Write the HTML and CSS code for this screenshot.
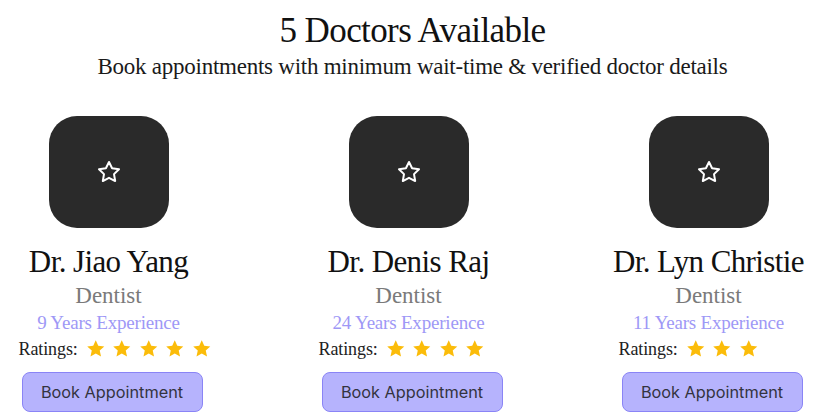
FILE: index.html
```html
<!DOCTYPE html>
<html lang="en">
<head>
<meta charset="utf-8">
<title>Doctors</title>
<link rel="stylesheet" href="styles.css">
</head>
<body>
<main class="page">
  <header class="intro">
    <h1 class="title">5 Doctors Available</h1>
    <p class="subtitle">Book appointments with minimum wait-time &amp; verified doctor details</p>
  </header>
  <section class="doctors">
    <article class="card">
      <div class="avatar">
        <svg class="avatar-icon" viewBox="0 0 24 24" width="24" height="24"><polygon points="12 2 15.09 8.26 22 9.27 17 14.14 18.18 21.02 12 17.77 5.82 21.02 7 14.14 2 9.27 8.91 8.26 12 2"/></svg>
      </div>
      <h2 class="name">Dr. Jiao Yang</h2>
      <p class="specialty">Dentist</p>
      <p class="experience">9 Years Experience</p>
      <div class="ratings">
        <span class="ratings-label">Ratings:</span>
        <span class="stars">
          <svg class="star" viewBox="0 0 24 24"><polygon points="12 1.5 15.1 8.3 22.5 9.1 16.9 14.1 18.5 21.5 12 17.7 5.5 21.5 7.1 14.1 1.5 9.1 8.9 8.3"/></svg>
          <svg class="star" viewBox="0 0 24 24"><polygon points="12 1.5 15.1 8.3 22.5 9.1 16.9 14.1 18.5 21.5 12 17.7 5.5 21.5 7.1 14.1 1.5 9.1 8.9 8.3"/></svg>
          <svg class="star" viewBox="0 0 24 24"><polygon points="12 1.5 15.1 8.3 22.5 9.1 16.9 14.1 18.5 21.5 12 17.7 5.5 21.5 7.1 14.1 1.5 9.1 8.9 8.3"/></svg>
          <svg class="star" viewBox="0 0 24 24"><polygon points="12 1.5 15.1 8.3 22.5 9.1 16.9 14.1 18.5 21.5 12 17.7 5.5 21.5 7.1 14.1 1.5 9.1 8.9 8.3"/></svg>
          <svg class="star" viewBox="0 0 24 24"><polygon points="12 1.5 15.1 8.3 22.5 9.1 16.9 14.1 18.5 21.5 12 17.7 5.5 21.5 7.1 14.1 1.5 9.1 8.9 8.3"/></svg>
        </span>
      </div>
      <button class="book" type="button">Book Appointment</button>
    </article>
    <article class="card">
      <div class="avatar">
        <svg class="avatar-icon" viewBox="0 0 24 24" width="24" height="24"><polygon points="12 2 15.09 8.26 22 9.27 17 14.14 18.18 21.02 12 17.77 5.82 21.02 7 14.14 2 9.27 8.91 8.26 12 2"/></svg>
      </div>
      <h2 class="name">Dr. Denis Raj</h2>
      <p class="specialty">Dentist</p>
      <p class="experience">24 Years Experience</p>
      <div class="ratings">
        <span class="ratings-label">Ratings:</span>
        <span class="stars">
          <svg class="star" viewBox="0 0 24 24"><polygon points="12 1.5 15.1 8.3 22.5 9.1 16.9 14.1 18.5 21.5 12 17.7 5.5 21.5 7.1 14.1 1.5 9.1 8.9 8.3"/></svg>
          <svg class="star" viewBox="0 0 24 24"><polygon points="12 1.5 15.1 8.3 22.5 9.1 16.9 14.1 18.5 21.5 12 17.7 5.5 21.5 7.1 14.1 1.5 9.1 8.9 8.3"/></svg>
          <svg class="star" viewBox="0 0 24 24"><polygon points="12 1.5 15.1 8.3 22.5 9.1 16.9 14.1 18.5 21.5 12 17.7 5.5 21.5 7.1 14.1 1.5 9.1 8.9 8.3"/></svg>
          <svg class="star" viewBox="0 0 24 24"><polygon points="12 1.5 15.1 8.3 22.5 9.1 16.9 14.1 18.5 21.5 12 17.7 5.5 21.5 7.1 14.1 1.5 9.1 8.9 8.3"/></svg>
        </span>
      </div>
      <button class="book" type="button">Book Appointment</button>
    </article>
    <article class="card">
      <div class="avatar">
        <svg class="avatar-icon" viewBox="0 0 24 24" width="24" height="24"><polygon points="12 2 15.09 8.26 22 9.27 17 14.14 18.18 21.02 12 17.77 5.82 21.02 7 14.14 2 9.27 8.91 8.26 12 2"/></svg>
      </div>
      <h2 class="name">Dr. Lyn Christie</h2>
      <p class="specialty">Dentist</p>
      <p class="experience">11 Years Experience</p>
      <div class="ratings">
        <span class="ratings-label">Ratings:</span>
        <span class="stars">
          <svg class="star" viewBox="0 0 24 24"><polygon points="12 1.5 15.1 8.3 22.5 9.1 16.9 14.1 18.5 21.5 12 17.7 5.5 21.5 7.1 14.1 1.5 9.1 8.9 8.3"/></svg>
          <svg class="star" viewBox="0 0 24 24"><polygon points="12 1.5 15.1 8.3 22.5 9.1 16.9 14.1 18.5 21.5 12 17.7 5.5 21.5 7.1 14.1 1.5 9.1 8.9 8.3"/></svg>
          <svg class="star" viewBox="0 0 24 24"><polygon points="12 1.5 15.1 8.3 22.5 9.1 16.9 14.1 18.5 21.5 12 17.7 5.5 21.5 7.1 14.1 1.5 9.1 8.9 8.3"/></svg>
        </span>
      </div>
      <button class="book" type="button">Book Appointment</button>
    </article>
  </section>
</main>
</body>
</html>
```
FILE: styles.css
```css
* { box-sizing: border-box; }

html, body {
  margin: 0;
  padding: 0;
  background: #ffffff;
}

body {
  font-family: "Liberation Serif", "Times New Roman", serif;
  color: #111111;
  width: 825px;
  height: 415px;
  overflow: hidden;
}

.page {
  padding-top: 11px;
}

.intro {
  text-align: center;
}

.title {
  margin: 0;
  font-size: 35px;
  line-height: 40px;
  font-weight: 400;
  letter-spacing: -0.6px;
  color: #111111;
}

.subtitle {
  margin: 2px 0 0;
  font-size: 23px;
  line-height: 28px;
  letter-spacing: -0.25px;
  color: #1a1a1a;
}

.doctors {
  display: flex;
  justify-content: center;
  gap: 100px;
  margin-top: 35px;
  padding-right: 8px;
}

.card {
  width: 200px;
  display: flex;
  flex-direction: column;
  align-items: center;
}

.avatar {
  width: 120px;
  height: 112px;
  border-radius: 28px;
  background: #2a2a2a;
  display: flex;
  align-items: center;
  justify-content: center;
}

.avatar-icon {
  width: 24px;
  height: 24px;
  fill: none;
  stroke: #ffffff;
  stroke-width: 2;
  stroke-linejoin: round;
  stroke-linecap: round;
}

.name {
  margin: 16px 0 0;
  font-size: 31px;
  line-height: 36px;
  font-weight: 400;
  letter-spacing: -0.6px;
  white-space: nowrap;
  color: #111111;
}

.specialty {
  margin: 0;
  font-size: 23px;
  line-height: 31px;
  color: #7a7a7a;
}

.experience {
  margin: 0;
  font-size: 19px;
  line-height: 24px;
  letter-spacing: -0.2px;
  color: #9e98f6;
  white-space: nowrap;
}

.ratings {
  align-self: flex-start;
  margin: 2px 0 0 10px;
  display: flex;
  align-items: center;
  gap: 8px;
  height: 24px;
}

.ratings-label {
  font-size: 18px;
  line-height: 24px;
  color: #222222;
  letter-spacing: -0.1px;
}

.stars {
  display: flex;
  gap: 7px;
}

.star {
  width: 19.5px;
  height: 19.5px;
  fill: #fbbc0a;
}

.book {
  align-self: flex-start;
  margin: 11px 0 0 13px;
  width: 181px;
  height: 40px;
  border: 1px solid #8a84f6;
  border-radius: 8px;
  background: #b6b3fd;
  font-family: Inter, "Liberation Sans", sans-serif;
  font-size: 16.3px;
  color: #33333f;
  padding: 0;
}
```
